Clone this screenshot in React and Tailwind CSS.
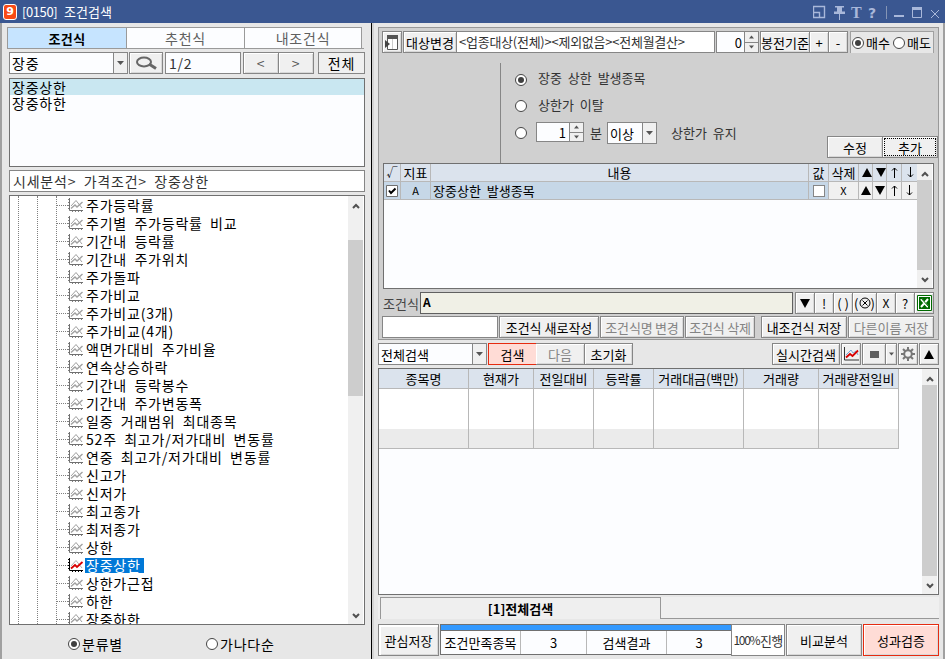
import React, { useState } from "react";
import clsx from "clsx";

const treeItems = [
  "주가등락률", "주기별 주가등락률 비교", "기간내 등락률", "기간내 주가위치",
  "주가돌파", "주가비교", "주가비교(3개)", "주가비교(4개)",
  "액면가대비 주가비율", "연속상승하락", "기간내 등락봉수", "기간내 주가변동폭",
  "일중 거래범위 최대종목", "52주 최고가/저가대비 변동률", "연중 최고가/저가대비 변동률", "신고가",
  "신저가", "최고종가", "최저종가", "상한",
  "장중상한", "상한가근접", "하한", "장중하한",
];

const resultCols = [
  { label: "종목명", w: "w-[90px]" },
  { label: "현재가", w: "w-[65px]" },
  { label: "전일대비", w: "w-[60px]" },
  { label: "등락률", w: "w-[60px]" },
  { label: "거래대금(백만)", w: "w-[90px]" },
  { label: "거래량", w: "w-[75px]" },
  { label: "거래량전일비", w: "w-[80px]" },
];

const wide = "text-[14px] tracking-[0.8px] [word-spacing:3.4px]";
const bevel = "shadow-[inset_1px_1px_0_#fff,inset_-1px_-1px_0_#d8d8d8]";

function Btn({ className, children, disabled }) {
  return (
    <button
      className={clsx(
        "flex h-[22px] shrink-0 items-center justify-center border border-[#868686] bg-[#f0f0f0]",
        bevel,
        disabled && "text-[#848484]",
        className
      )}
    >
      {children}
    </button>
  );
}

function Radio({ on }) {
  return (
    <svg width="12" height="12" viewBox="0 0 12 12" className="shrink-0">
      <circle cx="6" cy="6" r="5.5" fill="#fff" stroke="#444" />
      {on && <circle cx="6" cy="6" r="3" fill="#404040" />}
    </svg>
  );
}

function Caret({ up, className }) {
  return (
    <svg width="7" height="4" viewBox="0 0 7 4" className={clsx("shrink-0", className)}>
      <path d={up ? "M0 4 3.5 0 7 4Z" : "M0 0H7L3.5 4Z"} fill="#555" />
    </svg>
  );
}

function Triangle({ up }) {
  return (
    <svg width="10" height="9" viewBox="0 0 10 9" className="shrink-0">
      <path d={up ? "M0 9 5 0 10 9Z" : "M0 0H10L5 9Z"} fill="#000" />
    </svg>
  );
}

function Arrow({ up }) {
  return (
    <svg width="7" height="11" viewBox="0 0 7 11" className="shrink-0">
      <path d={up ? "M3.5 11V1M1 3.5 3.5 1 6 3.5" : "M3.5 0V10M1 7.5 3.5 10 6 7.5"} fill="none" stroke="#000" />
    </svg>
  );
}

function Spinner() {
  return (
    <div className="flex w-[14px] shrink-0 flex-col border-l border-[#868686]">
      <div className="flex flex-1 items-center justify-center border-b border-[#868686] bg-[#f0f0f0]"><Caret up className="w-[5px]" /></div>
      <div className="flex flex-1 items-center justify-center bg-[#f0f0f0]"><Caret className="w-[5px]" /></div>
    </div>
  );
}

function Chevron({ up }) {
  return (
    <svg width="8" height="6" viewBox="0 0 8 6">
      <path d={up ? "M1 5 4 2 7 5" : "M1 1 4 4 7 1"} fill="none" stroke="#505050" strokeWidth="2" />
    </svg>
  );
}

function Scrollbar({ before, thumb, after, width = "w-[15px]" }) {
  return (
    <div className={clsx("flex shrink-0 flex-col bg-[#f0f0f0]", width)}>
      <div className="flex h-4 shrink-0 items-center justify-center pt-[3px]"><Chevron up /></div>
      <div className={clsx("shrink-0", before)} />
      <div className={clsx("shrink-0 bg-[#cdcdcd]", thumb)} />
      <div className={clsx("flex-1", after)} />
      <div className="flex h-4 shrink-0 items-center justify-center"><Chevron /></div>
    </div>
  );
}

function ChartIcon({ active }) {
  return (
    <svg width="16" height="14" viewBox="0 0 16 14" className="shrink-0">
      <path d="M1.5 0V12.5H15" fill="none" stroke={active ? "#000" : "#707070"} />
      <path d="M0 1.5H1M0 4.5H1M0 7.5H1M0 10.5H1M4.5 13V14M7.5 13V14M10.5 13V14M13.5 13V14" stroke={active ? "#000" : "#808080"} />
      <path d="M3 8 8 2.5 14 10" fill="none" stroke={active ? "#b0b0b0" : "#a0a0a0"} />
      <path d="M3 10.5 7 7 9 9 14.5 4" fill="none" stroke={active ? "#d80000" : "#a0a0a0"} strokeWidth={active ? 1.8 : 1.4} />
    </svg>
  );
}

function TitleBar() {
  return (
    <header className="flex h-[23px] shrink-0 items-center bg-[#3a5791] pl-[3px] text-white">
      <div className="flex h-[16px] w-[14px] items-center justify-center rounded-[3px] border border-white bg-[#fa4a16] font-['DejaVu_Sans'] text-[11px] font-bold leading-none">9</div>
      <span className="ml-[5px] w-[42px] text-[13px] tracking-[-0.4px]">[0150]</span>
      <span className="flex-1">조건검색</span>
      <svg width="132" height="18" viewBox="0 0 132 18" fill="none" stroke="#a9b8da">
        <path d="M.5 3.5H11.5V14.5H.5Z M.5 9.5H6.5V14.5" strokeWidth="1.4" />
        <path d="M22 3H31V4.5H29V8.5H32V11H21V8.5H24V4.5H22Z M26 11H27V17H26Z" fill="#a9b8da" stroke="none" />
        <path d="M73.5 3V16" stroke="#8595b5" />
        <path d="M81 13H91" strokeWidth="2" />
        <path d="M99.5 6H108.500V14.500H99.500Z" />
        <path d="M99 5.500H109" strokeWidth="3" />
        <path d="M118 7 126 15M126 7 118 15" />
        <text x="38" y="15" fill="#a9b8da" stroke="none" fontFamily="Liberation Serif" fontWeight="bold" fontSize="16">T</text>
        <text x="55" y="15" fill="#a9b8da" stroke="none" fontFamily="DejaVu Sans" fontWeight="bold" fontSize="14">?</text>
      </svg>
    </header>
  );
}

function LeftPanel() {
  const [selected, setSelected] = useState(20);
  return (
    <aside className="flex w-[372px] shrink-0 flex-col border-l-2 border-r border-l-[#a0a0a0] border-r-black bg-[#e7e7e7] pl-[5px]">
      <div className={clsx("mt-[4px] flex h-[22px] w-[357px] items-stretch border-b border-[#9a9a9a]", wide)}>
        <div className="flex w-[119px] items-center justify-center border-l border-t border-[#9a9a9a] bg-[#c6e4ff] text-[13px] font-bold tracking-[0.3px]">조건식</div>
        <div className="flex w-[118px] items-center justify-center border-l border-t border-[#9a9a9a] bg-[#fcfdff] text-[#606060]">추천식</div>
        <div className="flex w-[118px] items-center justify-center border-x border-t border-[#9a9a9a] bg-[#fcfdff] text-[#606060]">내조건식</div>
      </div>

      <div className={clsx("ml-[2px] mt-[3px] flex h-[22px]", wide)}>
        <div className="flex w-[119px] border border-[#868686] bg-[#fcfdff]">
          <span className="flex flex-1 items-center pl-[2px]">장중</span>
          <span className="flex w-[14px] items-center justify-center border-l border-[#868686] bg-[#f0f0f0]"><Caret /></span>
        </div>
        <Btn className="ml-px w-[34px]">
          <svg width="23" height="14" viewBox="0 0 23 14">
            <ellipse cx="9" cy="6" rx="7" ry="4.500" fill="none" stroke="#666" strokeWidth="2" />
            <path d="M14 8 21 12.500" stroke="#666" strokeWidth="3" />
          </svg>
        </Btn>
        <div className="ml-[2px] flex w-[76px] items-center border border-[#868686] bg-[#fcfdff] pl-[3px] text-[#333]">1/2</div>
        <Btn className="ml-[2px] w-[36px] text-[#555]">&lt;</Btn>
        <Btn className="-ml-px w-[36px] text-[#555]">&gt;</Btn>
        <Btn className="ml-[4px] w-[47px] bg-[#c9d0ff] shadow-none">전체</Btn>
      </div>

      <div className={clsx("ml-[2px] mt-[4px] h-[89px] w-[356px] border border-[#707070] bg-[#fcfdff]", wide)}>
        <div className="flex h-[16px] items-center bg-[#c9e7f1] pl-[2px]">장중상한</div>
        <div className="flex h-[16px] items-center pl-[2px]">장중하한</div>
      </div>

      <div className={clsx("ml-[2px] mt-[3px] flex h-[22px] w-[356px] items-center border border-[#868686] bg-white pb-px pl-[3px] text-[#333]", wide)}>
        시세분석&gt; 가격조건&gt; 장중상한
      </div>

      <div className="ml-[2px] mt-[3px] flex h-[430px] w-[356px] border border-[#707070] bg-white pr-px">
        <div className={clsx("flex flex-1 overflow-hidden pl-[8px]", wide)}>
          <div className="w-[19px] shrink-0 border-l border-dotted border-[#808080]" />
          <div className="w-[19px] shrink-0 border-l border-dotted border-[#808080]" />
          <div className="flex-1 border-l border-dotted border-[#808080]">
            {treeItems.map((name, i) => (
              <div key={name} onClick={() => setSelected(i)} className="flex h-[18px] items-center whitespace-nowrap">
                <span className="w-[11px] shrink-0 border-t border-dotted border-[#808080]" />
                <ChartIcon active={selected === i} />
                <span className={clsx("ml-px flex h-[15px] items-center px-px", selected === i && "bg-[#0078d7] pr-[3px] text-white")}>{name}</span>
              </div>
            ))}
          </div>
        </div>
        <Scrollbar before="h-[28px]" thumb="h-[156px]" />
      </div>

      <div className={clsx("flex flex-1 items-center pl-[61px] pt-[4px]", wide)}>
        <label className="flex w-[138px] items-center gap-[2px]"><Radio on />분류별</label>
        <label className="flex items-center gap-[2px]"><Radio />가나다순</label>
      </div>
    </aside>
  );
}

function TargetRow() {
  return (
    <div className="flex h-[22px]">
      <Btn className="w-[20px]">
        <svg width="14" height="15" viewBox="0 0 14 15">
          <path d="M2.500 1.500H12.500V14.500H2.500Z" fill="#fff" stroke="#555" />
          <path d="M2 0H13V4H2Z" fill="#555" />
          <path d="M7.500 4V14" stroke="#ccc" />
          <path d="M0 5 5 9 0 13Z" fill="#444" />
        </svg>
      </Btn>
      <Btn className="ml-px w-[54px]">대상변경</Btn>
      <div className="-ml-px flex w-[259px] items-center whitespace-nowrap border border-[#868686] bg-white pb-px pl-[2px] tracking-[-0.25px] text-[#333]">
        &lt;업종대상(전체)&gt;&lt;제외없음&gt;&lt;전체월결산&gt;
      </div>
      <div className="ml-px flex w-[43px] border border-[#868686] bg-[#fcfdff]">
        <span className="flex flex-1 items-center justify-end pr-[2px]">0</span>
        <Spinner />
      </div>
      <Btn className="ml-px w-[50px]">봉전기준</Btn>
      <Btn className="-ml-px w-[20px]">+</Btn>
      <Btn className="-ml-px w-[20px]">-</Btn>
      <div className="ml-[2px] flex w-[84px] items-center gap-[2px] border border-b-0 border-[#a0a0a0] bg-[#e7e7e7] pl-px">
        <Radio on /><span className="w-[25px]">매수</span>
        <Radio /><span>매도</span>
      </div>
    </div>
  );
}

function OptionArea() {
  return (
    <div className="flex h-[110px] pt-[10px] text-[#333]">
      <div className="w-[118px] shrink-0" />
      <div className="flex flex-1 flex-col border-l border-[#868686] pl-[14px]">
        <label className="flex h-[28px] items-center gap-[11px]"><span className="pt-[5px]"><Radio on /></span>장중 상한 발생종목</label>
        <label className="flex h-[27px] items-center gap-[11px]"><span className="pt-[3px]"><Radio /></span>상한가 이탈</label>
        <div className="flex h-[27px] items-start pt-[4px]">
          <span className="pt-[5px]"><Radio /></span>
          <div className="ml-[9px] flex h-[20px] w-[48px] border border-[#868686] bg-[#fcfdff] text-black">
            <span className="flex flex-1 items-center justify-end pr-[3px]">1</span>
            <Spinner />
          </div>
          <span className="ml-[6px] flex h-[20px] w-[17px] items-center">분</span>
          <div className="flex h-[22px] w-[50px] border border-[#868686] bg-[#fcfdff] text-black">
            <span className="flex flex-1 items-center pl-[2px]">이상</span>
            <span className="flex w-[14px] items-center justify-center border-l border-[#868686] bg-[#f0f0f0]"><Caret /></span>
          </div>
          <span className="ml-[14px] flex h-[20px] items-center">상한가 유지</span>
        </div>
      </div>
      <div className="-ml-[120px] mr-[0px] mt-[73px] flex w-[111px] text-black">
        <Btn className="w-[56px]">수정</Btn>
        <Btn className="-ml-px w-[56px]">
          <span className="flex h-[18px] w-[52px] items-center justify-center border border-dotted border-black">추가</span>
        </Btn>
      </div>
    </div>
  );
}

const cell = "flex shrink-0 items-center justify-center border-b border-r border-[#b8b8b8]";

function ConditionTable() {
  return (
    <div className="ml-px flex h-[126px] w-[551px] border border-[#707070] bg-[#fcfdff] pr-px">
      <div className="w-[533px]">
        <div className="flex h-[18px] bg-[#dbe3ed]">
          <div className={clsx(cell, "w-[17px] text-[11px]")}>√</div>
          <div className={clsx(cell, "w-[30px]")}>지표</div>
          <div className={clsx(cell, "w-[378px]")}>내용</div>
          <div className={clsx(cell, "w-[20px]")}>값</div>
          <div className={clsx(cell, "w-[30px]")}>삭제</div>
          <div className={clsx(cell, "w-[14px] pl-[2px]")}><Triangle up /></div>
          <div className={clsx(cell, "w-[14px] pl-[2px]")}><Triangle /></div>
          <div className={clsx(cell, "w-[15px]")}><Arrow up /></div>
          <div className={clsx(cell, "w-[15px] border-r-0 pl-[2px]")}><Arrow /></div>
        </div>
        <div className="flex h-[18px] bg-[#c6d7e7]">
          <div className={clsx(cell, "w-[17px]")}>
            <svg width="12" height="12" viewBox="0 0 12 12">
              <path d="M.5.5H11.500V11.500H.5Z" fill="#fff" stroke="#707070" />
              <path d="M3 5.500 5 8 9.500 3.500" fill="none" stroke="#000" strokeWidth="2" />
            </svg>
          </div>
          <div className={clsx(cell, "w-[30px] text-[11px]")}>A</div>
          <div className={clsx(cell, "w-[378px] justify-start pl-[2px]")}>장중상한 발생종목</div>
          <div className={clsx(cell, "w-[20px]")}><span className="size-[12px] border border-[#868686] bg-white" /></div>
          <div className={clsx(cell, "w-[30px] bg-[#f0f0f0] text-[11px]")}>X</div>
          <div className={clsx(cell, "w-[14px] bg-[#f0f0f0]")}><Triangle up /></div>
          <div className={clsx(cell, "w-[14px] bg-[#f0f0f0]")}><Triangle /></div>
          <div className={clsx(cell, "w-[15px] bg-[#f0f0f0]")}><Arrow up /></div>
          <div className={clsx(cell, "w-[15px] border-r-0 bg-[#f0f0f0]")}><Arrow /></div>
        </div>
      </div>
      <Scrollbar before="h-0" thumb="h-[90px]" />
    </div>
  );
}

function FormulaRows() {
  return (
    <>
      <div className="ml-px mt-[3px] flex h-[22px]">
        <span className="flex w-[37px] items-center text-[#444]">조건식</span>
        <div className="w-[373px] border border-[#606060] bg-[#f0f0e6] pl-[2px] text-[12px] font-bold leading-[17px]">A</div>
        <Btn className="ml-[2px] w-[20px]"><Triangle /></Btn>
        <Btn className="-ml-px w-[20px]">!</Btn>
        <Btn className="-ml-px w-[20px]"><span className="whitespace-nowrap">( )</span></Btn>
        <Btn className="-ml-px w-[25px]">
          <span>(</span>
          <svg width="12" height="12" viewBox="0 0 12 12" className="shrink-0"><circle cx="6" cy="6" r="5" fill="none" stroke="#000" /><path d="M3.500 3.500 8.500 8.500M8.500 3.500 3.500 8.500" stroke="#000" /></svg>
          <span>)</span>
        </Btn>
        <Btn className="-ml-px w-[20px] text-[12px]">X</Btn>
        <Btn className="-ml-px w-[20px]">?</Btn>
        <Btn className="-ml-px w-[20px]">
          <svg width="15" height="16" viewBox="0 0 15 16" className="shrink-0">
            <path d="M.5.5H14.500V15.500H.5Z" fill="#fff" stroke="#006a00" />
            <path d="M2 2H13V14H2Z" fill="#006a00" />
            <path d="M4 4 11 12M11 4 4 12" stroke="#fff" strokeWidth="2" />
            <path d="M4 3 12 12" stroke="#006a00" strokeWidth="1" />
          </svg>
        </Btn>
      </div>
      <div className="mt-[2px] flex h-[22px]">
        <div className="w-[116px] border border-[#868686] bg-white" />
        <Btn className="ml-px w-[100px]">조건식 새로작성</Btn>
        <Btn disabled className="ml-px w-[84px] tracking-[-0.2px]">조건식명 변경</Btn>
        <Btn disabled className="ml-px w-[70px] tracking-[-0.2px]">조건식 삭제</Btn>
        <Btn className="ml-[6px] w-[86px]">내조건식 저장</Btn>
        <Btn disabled className="ml-px w-[86px]">다른이름 저장</Btn>
      </div>
    </>
  );
}

function SearchBar() {
  return (
    <div className="mt-[3px] flex h-[22px] w-[561px]">
      <div className="flex w-[109px] border border-[#868686] bg-[#fcfdff]">
        <span className="flex flex-1 items-center pl-[2px]">전체검색</span>
        <span className="flex w-[14px] items-center justify-center border-l border-[#868686] bg-[#f0f0f0]"><Caret /></span>
      </div>
      <Btn className="ml-px w-[49px] border-[#e62b10] bg-[#ffdcd6] shadow-none">검색</Btn>
      <Btn disabled className="-ml-px w-[49px] border-l-0">다음</Btn>
      <Btn className="-ml-px w-[49px]">초기화</Btn>
      <div className="flex-1" />
      <Btn className="w-[68px]">실시간검색</Btn>
      <Btn className="ml-px w-[20px]">
        <svg width="15" height="14" viewBox="0 0 15 14" className="shrink-0">
          <path d="M.5 0V13H15" fill="none" stroke="#333" />
          <path d="M2 8 7 3 9 6 12 4 14 8" fill="none" stroke="#7ba7d8" />
          <path d="M2 10.500 6 7 8.500 9 14 3.500" fill="none" stroke="#d80000" strokeWidth="1.800" />
        </svg>
      </Btn>
      <Btn className="ml-px w-[24px]"><span className="h-[7px] w-[9px] bg-[#606060]" /></Btn>
      <Btn className="-ml-px w-[12px]"><Caret className="w-[5px]" /></Btn>
      <Btn className="ml-px w-[20px]">
        <svg width="14" height="14" viewBox="0 0 14 14" className="shrink-0" fill="none" stroke="#777">
          <circle cx="7" cy="7" r="3.800" strokeWidth="2" />
          <path d="M7 0V3M7 11V14M0 7H3M11 7H14M2 2 4 4M10 10 12 12M12 2 10 4M4 10 2 12" strokeWidth="2" />
        </svg>
      </Btn>
      <Btn className="ml-px w-[20px]"><Triangle up /></Btn>
    </div>
  );
}

function ResultTable() {
  return (
    <div className="mt-[3px] flex h-[227px] w-[561px] justify-between border border-[#707070] bg-[#fcfdff] pr-px">
      <div>
        {["h-[20px] bg-[#dbe3ed] border-b", "h-[40px] bg-white", "h-[20px] bg-[#ebebeb] border-b"].map((row, r) => (
          <div key={row} className="flex">
            {resultCols.map(({ label, w }) => (
              <div key={label} className={clsx("flex items-center justify-center whitespace-nowrap border-r border-[#b8b8b8]", row, w)}>
                {r === 0 && label}
              </div>
            ))}
          </div>
        ))}
      </div>
      <Scrollbar before="h-0" thumb="h-[191px]" />
    </div>
  );
}

function Footer() {
  return (
    <>
      <div className="mt-[2px] flex h-[22px] w-[561px] bg-[#efefef]">
        <div className="ml-[2px] flex w-[281px] items-center justify-center border border-b-0 border-[#989898] pb-px font-bold">[1]전체검색</div>
        <div className="flex-1 border-b border-[#989898]" />
      </div>
      <div className="mt-[5px] flex h-[32px] w-[561px]">
        <Btn className="h-full w-[61px] shadow-[inset_2px_2px_0_#fff,inset_-1px_-1px_0_#d8d8d8]">관심저장</Btn>
        <div className="ml-px flex h-[31px] w-[292px] flex-col border border-[#707070] bg-[#fcfdff]">
          <div className="h-[6px] border-b border-[#707070] bg-[#3399ff]" />
          <div className="flex flex-1">
            <div className="flex w-[80px] items-center justify-center border-r border-[#b8b8b8]">조건만족종목</div>
            <div className="flex w-[66px] items-center justify-center border-r border-[#b8b8b8]">3</div>
            <div className="flex w-[80px] items-center justify-center border-r border-[#b8b8b8]">검색결과</div>
            <div className="flex flex-1 items-center justify-center">3</div>
          </div>
        </div>
        <div className="-ml-px flex w-[54px] items-center justify-center whitespace-nowrap border border-[#868686] bg-white text-[#333]">
          <span className="text-[12px] tracking-[-1.4px]">100%</span><span className="ml-px tracking-[-0.8px]">진행</span>
        </div>
        <Btn className="ml-px h-full w-[76px] border-[#1248c4] bg-[#cbe8f7]">비교분석</Btn>
        <Btn className="ml-px h-full w-[76px] border-[#e62b10] bg-[#ffdcd6]">성과검증</Btn>
      </div>
    </>
  );
}

export default function App() {
  return (
    <div className="flex h-[659px] w-[945px] flex-col overflow-hidden bg-[#e7e7e7] font-['Noto_Sans_CJK_KR',sans-serif] text-[13px] leading-none text-black [word-spacing:3px]">
      <TitleBar />
      <div className="flex min-h-0 flex-1">
        <LeftPanel />
        <main className="flex flex-1 flex-col border-l-2 border-r-2 border-l-[#d4d4d4] border-r-[#a0a0a0] pl-[4px] pt-[4px]">
          <section className="flex h-[313px] w-[561px] shrink-0 flex-col border border-[#989898] bg-[#d0d0d0] pl-[3px] pt-[3px]">
            <TargetRow />
            <OptionArea />
            <ConditionTable />
            <FormulaRows />
          </section>
          <SearchBar />
          <ResultTable />
          <Footer />
        </main>
      </div>
    </div>
  );
}
